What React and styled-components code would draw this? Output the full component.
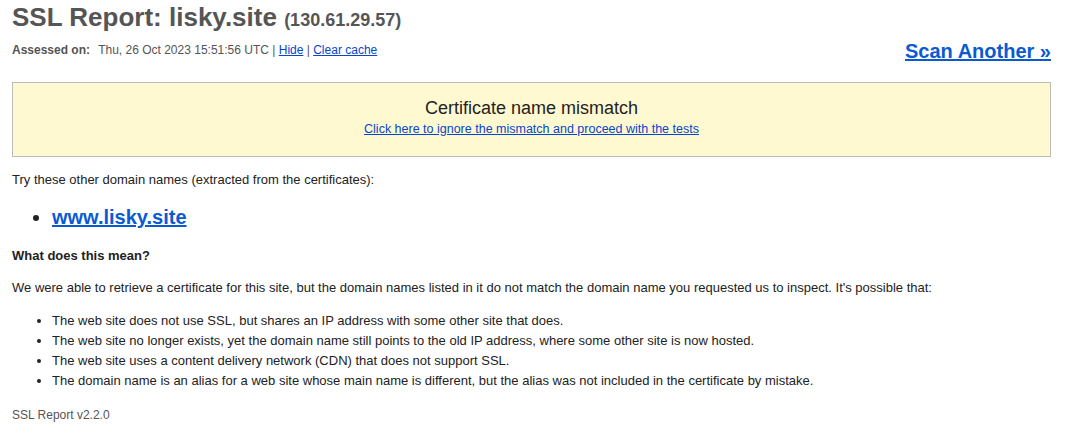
import styled, { createGlobalStyle } from "styled-components";

const GlobalStyle = createGlobalStyle`
  body {
    margin: 0;
    background: #fff;
    font-family: Arial, "Liberation Sans", Helvetica, sans-serif;
    color: #222;
  }
`;

const Page = styled.div`
  padding: 1px 15px 0 12px;
`;

const Header = styled.div`
  display: flex;
  justify-content: space-between;
  align-items: flex-end;
`;

const Title = styled.h1`
  margin: 0;
  font-size: 26px;
  font-weight: bold;
  color: #555;
  line-height: 32px;
`;

const Ip = styled.span`
  font-size: 18px;
`;

const Assessed = styled.div`
  font-size: 12px;
  color: #555;
  margin-top: 6px;
  line-height: 16px;
`;

const Label = styled.b`
  margin-right: 5px;
`;

const SmallLink = styled.a`
  color: #0645cc;
  text-decoration: underline;
  cursor: pointer;
`;

const ScanLink = styled.a`
  font-size: 20px;
  font-weight: bold;
  color: #0a5ad2;
  text-decoration: underline;
  margin-bottom: -5px;
  cursor: pointer;
`;

const WarningBox = styled.div`
  margin-top: 24px;
  background: #fff9d1;
  border: 1px solid #bcbcbc;
  height: 59px;
  padding-top: 14px;
  display: flex;
  flex-direction: column;
  align-items: center;
`;

const WarningTitle = styled.div`
  font-size: 18px;
  color: #222;
  line-height: 22px;
`;

const WarningLink = styled(SmallLink)`
  font-size: 12.5px;
  line-height: 16px;
  margin-top: 2px;
`;

const Text = styled.p`
  font-size: 13px;
  margin: ${(p) => p.$margin || "0"};
  line-height: 16px;
  color: #222;
`;

const DomainList = styled.ul`
  margin: 15px 0 17px;
  padding-left: 40px;
`;

const DomainItem = styled.li`
  font-size: 20px;
  line-height: 28px;
`;

const DomainLink = styled.a`
  font-weight: bold;
  color: #0a5ad2;
  text-decoration: underline;
`;

const Question = styled.div`
  font-size: 13px;
  font-weight: bold;
  color: #222;
  line-height: 16px;
`;

const ReasonList = styled.ul`
  margin: 15px 0 0;
  padding-left: 40px;
`;

const Reason = styled.li`
  font-size: 13px;
  line-height: 20px;
  color: #222;
`;

const Footer = styled.div`
  margin-top: 16px;
  font-size: 12px;
  color: #555;
  line-height: 16px;
`;

const reasons = [
  "The web site does not use SSL, but shares an IP address with some other site that does.",
  "The web site no longer exists, yet the domain name still points to the old IP address, where some other site is now hosted.",
  "The web site uses a content delivery network (CDN) that does not support SSL.",
  "The domain name is an alias for a web site whose main name is different, but the alias was not included in the certificate by mistake.",
];

export default function App() {
  return (
    <>
      <GlobalStyle />
      <Page>
        <Header>
          <div>
            <Title>
              SSL Report: lisky.site <Ip>(130.61.29.57)</Ip>
            </Title>
            <Assessed>
              <Label>Assessed on:</Label> Thu, 26 Oct 2023 15:51:56 UTC |{" "}
              <SmallLink>Hide</SmallLink> | <SmallLink>Clear cache</SmallLink>
            </Assessed>
          </div>
          <ScanLink>Scan Another »</ScanLink>
        </Header>

        <WarningBox>
          <WarningTitle>Certificate name mismatch</WarningTitle>
          <WarningLink>Click here to ignore the mismatch and proceed with the tests</WarningLink>
        </WarningBox>

        <Text $margin="15px 0 0">
          Try these other domain names (extracted from the certificates):
        </Text>
        <DomainList>
          <DomainItem>
            <DomainLink>www.lisky.site</DomainLink>
          </DomainItem>
        </DomainList>

        <Question>What does this mean?</Question>
        <Text $margin="16px 0 0">
          We were able to retrieve a certificate for this site, but the domain names listed in it do not
          match the domain name you requested us to inspect. It's possible that:
        </Text>
        <ReasonList>
          {reasons.map((r) => (
            <Reason key={r}>{r}</Reason>
          ))}
        </ReasonList>

        <Footer>SSL Report v2.2.0</Footer>
      </Page>
    </>
  );
}
